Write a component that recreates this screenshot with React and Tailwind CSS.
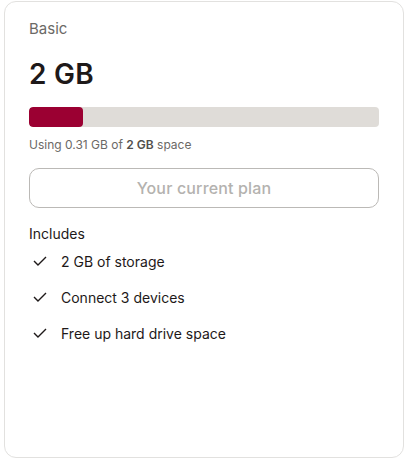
export default function App() {
  const features = ["2 GB of storage", "Connect 3 devices", "Free up hard drive space"];
  const used = 0.31;
  const total = 2;

  return (
    <div className="w-[410px] h-[465px] bg-white pt-px pl-1 pr-[6px] pb-[7px] font-['Inter',sans-serif]">
      <div className="h-full rounded-xl border border-[#e2e1df] px-6 pt-[17px]">
        <div className="text-[15px] leading-5 text-[#6b6966]">Basic</div>

        <div className="mt-[19px] text-[28px] leading-8 font-semibold text-[#1e1919] tracking-[0.01em]">2 GB</div>

        <div className="mt-[17px] h-5 w-full rounded bg-[#dfdcd8] overflow-hidden">
          <div
            className="h-full rounded bg-[#9b0032]"
            style={{ width: `${(used / total) * 100}%` }}
          />
        </div>

        <div className="mt-[10px] text-[12px] leading-4 text-[#6b6966]">
          Using 0.31 GB of <span className="font-semibold text-[#52504c]">2 GB</span> space
        </div>

        <button className="mt-[15px] h-[40px] w-full rounded-[10px] border border-[#bbb9b6] text-[16px] font-medium text-[#b4b2af] tracking-[0.01em]">
          Your current plan
        </button>

        <div className="mt-[16px] text-[14px] leading-5 text-[#1e1919]">Includes</div>

        <ul className="mt-[7px] flex flex-col gap-4">
          {features.map((f) => (
            <li key={f} className="flex items-center h-5 text-[14px] text-[#1e1919]">
              <svg width="14" height="10" viewBox="0 0 14 10" className="ml-[4px] mr-[14px]" fill="none">
                <path d="M1 5 L5 9 L13 1" stroke="#1e1919" strokeWidth="1.4" />
              </svg>
              {f}
            </li>
          ))}
        </ul>
      </div>
    </div>
  );
}
